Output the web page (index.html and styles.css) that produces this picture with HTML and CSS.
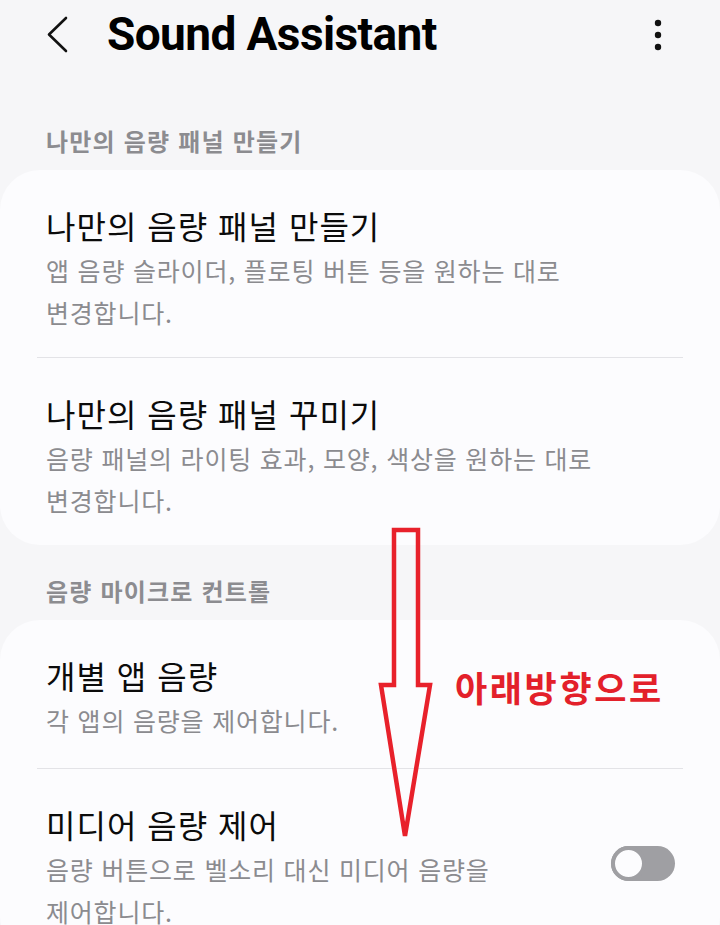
FILE: index.html
```html
<!DOCTYPE html>
<html lang="ko">
<head>
<meta charset="utf-8">
<title>Sound Assistant</title>
<link rel="stylesheet" href="styles.css">
</head>
<body>
<div class="screen">
  <header class="topbar">
    <svg class="back" width="24" height="40" viewBox="0 0 24 40" aria-hidden="true">
      <polyline points="21,3 4,19.5 21,36" fill="none" stroke="#111" stroke-width="2.6" stroke-linecap="round" stroke-linejoin="round"/>
    </svg>
    <h1 class="title">Sound Assistant</h1>
    <svg class="more" width="10" height="34" viewBox="0 0 10 34" aria-hidden="true">
      <circle cx="5" cy="5" r="3.2" fill="#111"/>
      <circle cx="5" cy="17" r="3.2" fill="#111"/>
      <circle cx="5" cy="29" r="3.2" fill="#111"/>
    </svg>
  </header>

  <div class="section-label first">나만의 음량 패널 만들기</div>
  <section class="card">
    <div class="item">
      <div class="item-text">
        <div class="item-title">나만의 음량 패널 만들기</div>
        <div class="item-sub">앱 음량 슬라이더, 플로팅 버튼 등을 원하는 대로<br>변경합니다.</div>
      </div>
    </div>
    <div class="divider"></div>
    <div class="item">
      <div class="item-text">
        <div class="item-title">나만의 음량 패널 꾸미기</div>
        <div class="item-sub">음량 패널의 라이팅 효과, 모양, 색상을 원하는 대로<br>변경합니다.</div>
      </div>
    </div>
  </section>

  <div class="section-label">음량 마이크로 컨트롤</div>
  <section class="card">
    <div class="item single">
      <div class="item-text">
        <div class="item-title">개별 앱 음량</div>
        <div class="item-sub">각 앱의 음량을 제어합니다.</div>
      </div>
    </div>
    <div class="divider"></div>
    <div class="item">
      <div class="item-text">
        <div class="item-title">미디어 음량 제어</div>
        <div class="item-sub">음량 버튼으로 벨소리 대신 미디어 음량을<br>제어합니다.</div>
      </div>
      <div class="toggle"><span class="knob"></span></div>
    </div>
  </section>

  <svg class="arrow" width="720" height="925" viewBox="0 0 720 925" aria-hidden="true">
    <polygon points="394,530 418,530 418,685 430,685 405,836 381,685 394,685" fill="none" stroke="#e8212b" stroke-width="4.5" stroke-linejoin="miter"/>
  </svg>
  <div class="annot">아래방향으로</div>
</div>
</body>
</html>
```

FILE: styles.css
```css
* {
  box-sizing: border-box;
}

html, body {
  margin: 0;
  padding: 0;
  background: #f6f6f8;
}

body {
  font-family: "Noto Sans CJK KR", "Noto Sans", sans-serif;
  color: #111;
}

.screen {
  position: relative;
  width: 720px;
  height: 925px;
  overflow: hidden;
}

.topbar {
  height: 70px;
  display: flex;
  align-items: center;
  padding: 0 0 0 45px;
}

.back {
  display: block;
  flex: none;
}

.title {
  margin: 0 0 0 38px;
  font-family: Roboto, "Liberation Sans", sans-serif;
  font-weight: 700;
  font-size: 46px;
  letter-spacing: -0.6px;
  line-height: 50px;
  color: #000;
  flex: 1;
  position: relative;
  top: -1px;
}

.more {
  display: block;
  flex: none;
  margin-right: 57px;
}

.section-label {
  margin-top: 23px;
  padding-left: 46px;
  font-size: 24px;
  font-weight: 700;
  line-height: 46px;
  color: #8c8c90;
  letter-spacing: 1.2px;
}

.section-label.first {
  margin-top: 48px;
}

.card {
  margin-top: 6px;
  background: #fcfcfe;
  border-radius: 40px;
  padding: 0 37px;
}

.item {
  display: flex;
  align-items: center;
  padding: 34px 8px 24px 9px;
}

.item.single {
  padding-bottom: 27px;
}

.item-text {
  flex: 1;
  min-width: 0;
}

.item-title {
  font-size: 32px;
  line-height: 42px;
  color: #0b0b0b;
  margin-bottom: 3px;
  white-space: nowrap;
  letter-spacing: 1px;
}

.item-sub {
  font-size: 25px;
  line-height: 42px;
  color: #8b8b8f;
  white-space: nowrap;
  letter-spacing: 0.8px;
}

.divider {
  height: 1px;
  background: #e3e3e7;
}

.toggle {
  flex: none;
  width: 64px;
  height: 35px;
  border-radius: 18px;
  background: #9f9fa3;
  position: relative;
  margin-top: -8px;
}

.knob {
  position: absolute;
  left: 0;
  top: 0;
  width: 35px;
  height: 35px;
  border-radius: 50%;
  background: #fcfcfe;
  border: 4px solid #9f9fa3;
}

.arrow {
  position: absolute;
  left: 0;
  top: 0;
  pointer-events: none;
}

.annot {
  position: absolute;
  left: 455px;
  top: 665px;
  font-size: 35px;
  font-weight: 700;
  line-height: 44px;
  color: #e3202a;
  letter-spacing: 2.6px;
}
```
